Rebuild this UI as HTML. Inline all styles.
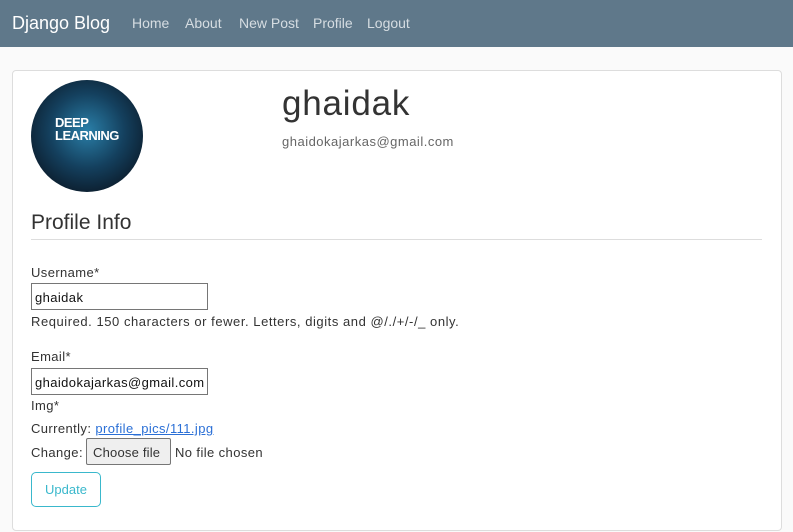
<!DOCTYPE html>
<html><head><style>
*{margin:0;padding:0;box-sizing:border-box}
body{width:793px;height:532px;background:#fafafa;font-family:"Liberation Sans",sans-serif;color:#444;position:relative;overflow:hidden}
.nav{position:absolute;left:0;top:0;width:793px;height:47px;background:#5f788a}
.a{position:absolute;white-space:nowrap}
.nav .a{color:#d6dde2;font-size:14px;top:15px}
.card{position:absolute;left:12px;top:70px;width:770px;height:461px;background:#fff;border:1px solid #ddd;border-radius:4px}
.t{font-size:13px;color:#333;letter-spacing:0.4px}
.inp{position:absolute;left:31px;width:177px;height:27px;border:1px solid #767676;font-size:13px;padding:6px 3px;color:#111;overflow:hidden;white-space:nowrap;letter-spacing:0.4px}
</style></head><body>
<div class="nav">
<div class="a" style="left:12px;top:13px;font-size:18px;color:#fff">Django Blog</div>
<div class="a" style="left:132px">Home</div>
<div class="a" style="left:185px">About</div>
<div class="a" style="left:239px">New Post</div>
<div class="a" style="left:313px">Profile</div>
<div class="a" style="left:367px">Logout</div>
</div>
<div class="card"></div>
<div class="a" style="left:31px;top:80px;width:112px;height:112px;border-radius:50%;background:radial-gradient(circle at 50% 45%,#2a7fa8,#14405e 45%,#0b1b2a 80%)"></div>
<div class="a" style="left:55px;top:116px;color:#fff;font-weight:bold;font-size:13px;line-height:13px;letter-spacing:-0.5px">DEEP<br>LEARNING</div>
<div class="a" style="left:282px;top:84px;font-size:35px;color:#333;letter-spacing:0.8px">ghaidak</div>
<div class="a" style="left:282px;top:134px;font-size:13px;color:#666;letter-spacing:0.5px">ghaidokajarkas@gmail.com</div>
<div class="a" style="left:31px;top:211px;font-size:21px;color:#333">Profile Info</div>
<div class="a" style="left:31px;top:239px;width:731px;height:1px;background:#ddd"></div>
<div class="a t" style="left:31px;top:265px">Username*</div>
<div class="inp" style="top:283px">ghaidak</div>
<div class="a t" style="left:31px;top:314px;letter-spacing:0.55px">Required. 150 characters or fewer. Letters, digits and @/./+/-/_ only.</div>
<div class="a t" style="left:31px;top:349px">Email*</div>
<div class="inp" style="top:368px">ghaidokajarkas@gmail.com</div>
<div class="a t" style="left:31px;top:398px">Img*</div>
<div class="a t" style="left:31px;top:421px">Currently: <span style="color:#2a6fd6;text-decoration:underline">profile_pics/111.jpg</span></div>
<div class="a t" style="left:31px;top:445px">Change:</div>
<div class="a t" style="left:86px;top:438px;width:85px;height:27px;background:#efefef;border:1px solid #767676;border-radius:2px;padding:6px 6px;letter-spacing:0.2px">Choose file</div>
<div class="a t" style="left:175px;top:445px">No file chosen</div>
<div class="a" style="left:31px;top:472px;width:70px;height:35px;border:1px solid #3ab8cc;border-radius:5px;color:#3ab8cc;font-size:13px;text-align:center;line-height:33px">Update</div>
</body></html>
